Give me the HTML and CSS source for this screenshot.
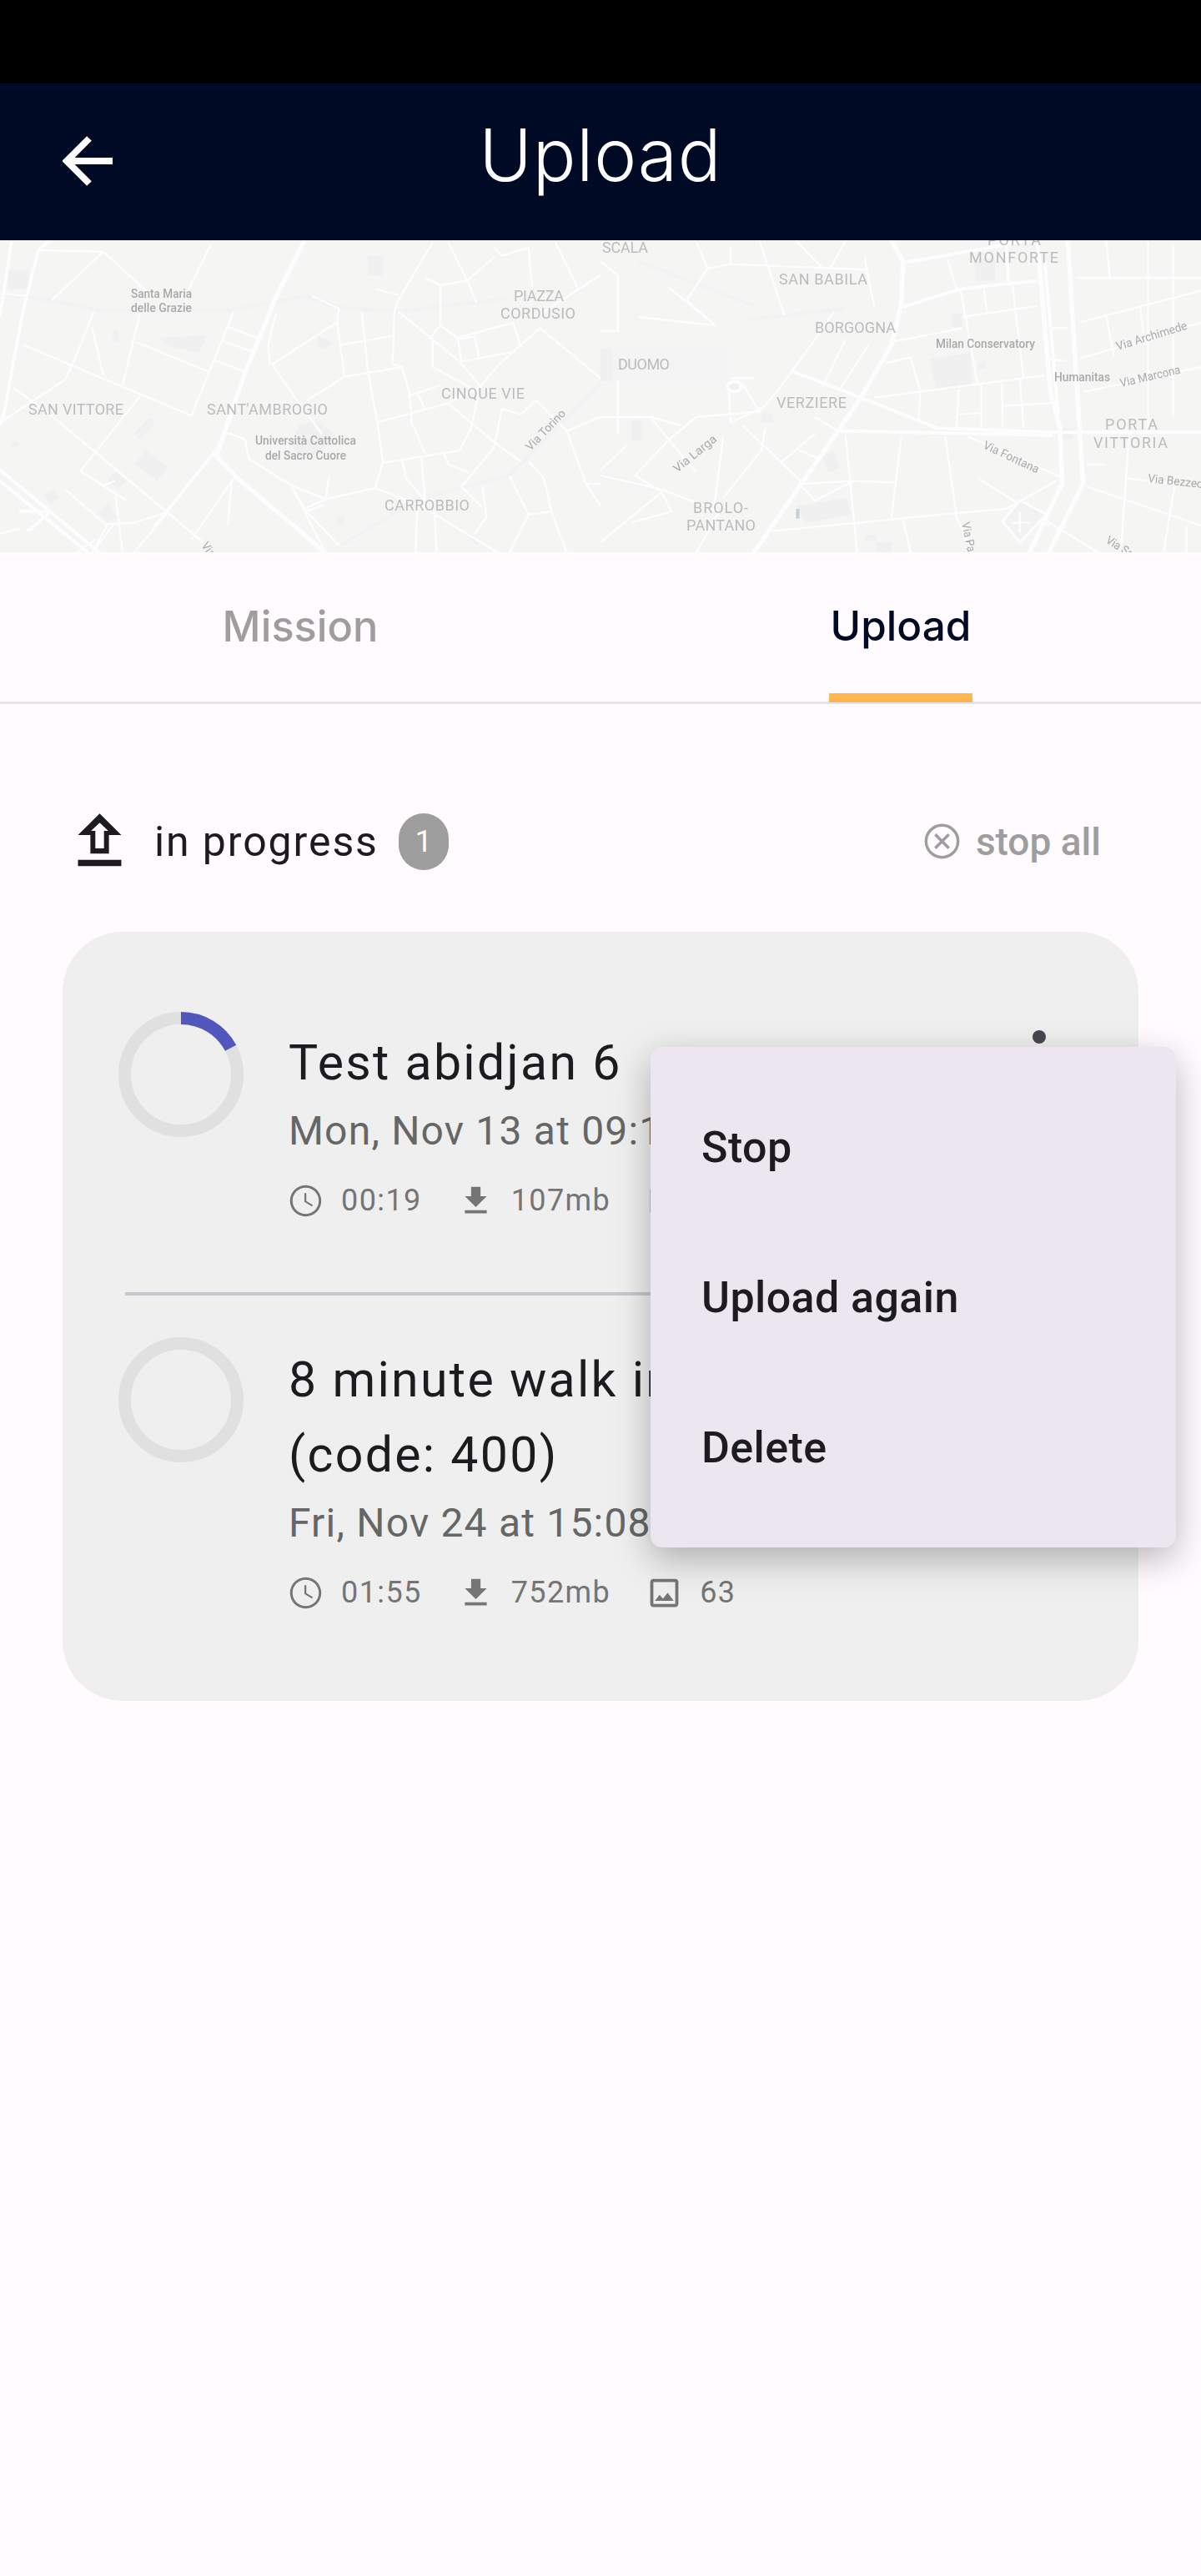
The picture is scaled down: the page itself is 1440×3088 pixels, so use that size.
FILE: index.html
```html
<!DOCTYPE html>
<html lang="en">
<head>
<meta charset="utf-8">
<title>Upload</title>
<link rel="stylesheet" href="styles.css">
</head>
<body>
<div class="page">
  <div class="statusbar"></div>
  <header class="appbar">
    <svg class="back" viewBox="0 0 60 60" aria-hidden="true"><path d="M60 30H6M32 3 5 30l27 27"/></svg>
    <h1 class="apptitle">Upload</h1>
  </header>

  <svg class="map" viewBox="0 288 1440 374" aria-hidden="true">
    <rect class="land" x="0" y="288" width="1440" height="374"/>
    <g transform="translate(0,280) scale(.4592,.3333)">
      <g class="block">
        <path d="M415 375 540 365 520 430 440 405Z"/><path d="M20 130h55v70H20Z"/><path d="M960 80h40v70h-40Z"/><path d="M295 350h15v40h-15Z"/>
        <path d="M280 880l25-25 25 35-25 30Z"/><path d="M350 720l40-60 15 20-40 60Z"/><path d="M350 830l30-50 60 60-30 50Z"/><path d="M115 940l25-20 15 30-25 25Z"/>
        <path d="M780 690l50-20 40 50-30 70-60 10-20-40Z"/><path d="M830 370l40 20-20 25-20-10Z"/><path d="M255 1000l30-30 20 50-25 20Z"/>
        <path d="M880 1020h20v20h-20Z"/><path d="M1230 1080l25 30-10 10-25-30Z"/><path d="M30 750h20v20H30Z"/>
      </g>
      <path class="tram" d="M0 215 130 240 260 275H600L800 225 885 265 1040 280 1320 235"/>
      <path class="tram" d="M890 1120 1100 950 1330 870 1568 540"/>
      <g class="minor">
        <path d="M100 60 270 65M0 215 70 225M270 65 135 240M270 65 400 230M550 40 490 210M365 290 320 545M245 280 190 470 170 525 0 680M60 400 500 655 610 280M355 390 545 497M595 335 675 378M580 385 660 425M560 455 640 497M240 335 270 510"/>
        <path d="M35 555 130 650 400 960 530 1110M365 585 210 855 330 960M210 855 270 905 300 890M300 925 320 1148M170 920 275 1045 350 1040 440 1000M130 1000 70 1070M610 880 500 1100M605 890 595 1050M440 1000 350 1148M280 1048 240 1148"/>
        <path d="M815 225 885 270 880 320 710 470 770 590 840 720M720 290 700 400 705 470M800 600 900 515 1050 480M880 320 900 515M945 280 960 490 985 680 1000 820 980 915M890 400 1025 368M1030 280 1025 470 1050 480 1070 580 1075 680 1110 790"/>
        <path d="M1130 380V480L1250 570M1040 280 1200 460 1255 550 1170 610 985 680M1170 610 1290 750 1360 820M1065 585 1150 545M1090 575 1110 630M1250 570 1230 700 1200 780 1110 800 1000 825M1310 630 1290 770 1205 910"/>
        <path d="M1150 180V330L1120 380M1150 330 1195 375 1205 460 1340 425 1410 340 1568 520M1195 375 1340 320 1360 410M1200 380 1240 370 1250 445M1300 475 1255 550M1340 425 1300 475M1290 50 1310 80 1380 50M1450 30 1510 200 1568 150M1510 200 1400 300M1130 30 1040 240 1030 280M1170 30 1220 170 1245 250M1220 170 1150 185 1110 160M1220 170 1290 85"/>
        <path d="M640 740 650 810 760 905 850 955 980 915 1100 980 1300 1148M590 715 640 740M760 905 800 1000 885 1120M850 955 795 990M800 1000 845 975M1205 910 1260 985M1330 870 1380 1010 1330 1148M1380 820 1420 880 1440 1000 1380 1010M1480 710 1530 900 1568 900M1400 600 1480 710 1568 660M1360 650 1400 600M1310 630 1360 650M1050 810 1060 880 1110 960M1100 800 1110 960M1160 790 1170 830 1225 860M1090 970 1085 1148M1135 1000 1140 1148M1260 910 1270 1020 1240 1080M1440 1000 1480 1148M1530 900 1568 980"/>
        <path d="M980 200 1040 220M1380 50 1390 200M0 1080 50 1060M200 1148 250 1100M300 1040 240 1148M850 955 860 870M760 905 850 1148"/>
      </g>
      <g class="mid">
        <path d="M100 60 60 280 10 650 0 690M30 30 0 300M0 850 260 1148M0 890 230 1148M50 1000 130 1000M75 1070 130 1000"/>
      </g>
      <path class="major" d="M795 25 720 230 640 500 575 760 565 800 620 880 850 1148"/>
      <path class="mid" d="M575 760 400 1060M130 25 100 60"/>
    </g>
    <g transform="translate(720,280) scale(.4592,.3333)">
      <g class="block">
        <path d="M860 450 965 430 970 550 875 558Z"/><path d="M975 90h55v80h-50Z"/><path d="M580 800l30-20 15 60-30 20Z"/><path d="M80 670h28v75H80Z"/><path d="M915 290l30-5v50h-25Z"/>
        <path d="M510 980l130-30 15 60-120 30Z"/><path d="M720 1110h40v40h-40Z"/><path d="M690 1085h30v20h-30Z"/><path d="M985 465h20v20h-20Z"/>
        <path class="duomo" d="M0 405H330V530H0Z"/><path d="M0 415H30V530H0Z"/><path d="M1205 700h30v36h-30Z"/><path d="M420 650h30v30h-30Z"/>
      </g>
      <path class="tram" d="M0 870 160 920M100 100 400 260M380 310 640 270"/>
      <g class="minor">
        <path d="M250 30 280 125 225 240 300 330M340 110 700 130M340 50V110M280 125 340 110M175 190 300 330M415 25 440 130 480 295M510 25 570 110 580 125M640 25 600 125M690 80 695 130 715 265M610 280 550 400 460 570 415 640 250 660 180 740 90 870 160 930 0 1110"/>
        <path d="M370 540 410 630M340 520H400M335 550 340 680 430 620M130 660 250 860M70 760 0 850M0 870 160 920 310 1000 250 1148M320 735 295 1000M370 690 470 820 530 900 655 890 770 895M430 700 420 780 320 950M470 825 560 720M520 780 570 810M160 930 185 1000 80 1040M580 550 640 380M625 560 700 400M560 660 620 710M100 300 300 330M0 350H45V150L0 100M45 530V720M0 660H80L130 660 210 690"/>
        <path d="M1240 160H1568M1250 320 1568 205M1250 450 1568 320M1260 570 1568 480M1320 25 1330 160M1430 30V700M1495 40V660M1320 290 1340 440M1410 270 1420 400M1380 720 1360 1120"/>
        <path d="M940 200 985 545M1000 190 1010 290M1075 180 1105 520M905 90 930 200M945 300 1140 260M760 390 945 340M745 465 810 445 835 570 830 680M715 590 1160 510M935 560 930 700M995 545V700M1048 535 1050 700M1095 525 1105 700M1050 620 1175 610M935 650 990 645M1180 340H1220M1170 450 1220 460"/>
        <path d="M640 725 670 1148M785 730 760 1020M900 730 930 1020 970 1148M960 730 1210 880M985 880 1300 1148M450 1070 890 1010 1060 990 1190 890M1270 910 1568 1050M1370 880 1500 900 1470 1148M790 1030 810 1148M1270 830H1320M520 900 560 960 660 890M1530 1050V1148M1120 1000 1170 1050"/>
      </g>
      <circle class="circle" cx="350" cy="550" r="18"/>
      <path class="hospital" d="M1095 960 1165 1010 1095 1110 1050 1035Z"/>
      <path class="minor" d="M1095 1000V1075M1075 1040H1120"/>
      <path class="oval" d="M515 990v35"/>
      <g class="mid">
        <path d="M790 105 1000 55 1130 20M785 265 940 200 1060 180 1140 170M1060 30 1065 180M500 495 680 590 880 700 1190 715H1568M620 710 1180 725M1160 100 1195 650"/>
      </g>
      <g class="major">
        <path d="M760 25 790 100 785 260 760 400 680 590 620 710 400 1148"/>
        <path d="M1140 20 1175 570 1200 700 1205 900 1120 1148M1220 25 1260 900 1170 1148"/>
      </g>
    </g>

    <g class="area">
      <text x="616" y="361" textLength="60">PIAZZA</text>
      <text x="600" y="382" textLength="90">CORDUSIO</text>
      <text x="34" y="497" textLength="114">SAN VITTORE</text>
      <text x="248" y="497" textLength="145">SANT'AMBROGIO</text>
      <text x="529" y="478" textLength="100">CINQUE VIE</text>
      <text x="461" y="612" textLength="102">CARROBBIO</text>
      <text x="722" y="303" textLength="55">SCALA</text>
      <text x="1184" y="294" textLength="64">PORTA</text>
      <text x="1162" y="315" textLength="107">MONFORTE</text>
      <text x="934" y="341" textLength="106">SAN BABILA</text>
      <text x="977" y="399" textLength="97">BORGOGNA</text>
      <text x="741" y="443" textLength="62">DUOMO</text>
      <text x="931" y="489" textLength="84">VERZIERE</text>
      <text x="1325" y="515" textLength="63">PORTA</text>
      <text x="1311" y="537" textLength="89">VITTORIA</text>
      <text x="831" y="615" textLength="66">BROLO-</text>
      <text x="823" y="636" textLength="83">PANTANO</text>
    </g>
    <g class="poi">
      <text x="157" y="357" textLength="73" lengthAdjust="spacingAndGlyphs">Santa Maria</text>
      <text x="157" y="374" textLength="73" lengthAdjust="spacingAndGlyphs">delle Grazie</text>
      <text x="306" y="533" textLength="121" lengthAdjust="spacingAndGlyphs">Università Cattolica</text>
      <text x="318" y="551" textLength="97" lengthAdjust="spacingAndGlyphs">del Sacro Cuore</text>
      <text x="1122" y="417" textLength="119" lengthAdjust="spacingAndGlyphs">Milan Conservatory</text>
      <text x="1264" y="457" textLength="67" lengthAdjust="spacingAndGlyphs">Humanitas</text>
    </g>
    <g class="street">
      <text transform="translate(636,541) rotate(-46)" textLength="62" lengthAdjust="spacingAndGlyphs">Via Torino</text>
      <text transform="translate(241,654) rotate(55)" textLength="18" lengthAdjust="spacingAndGlyphs">Via</text>
      <text transform="translate(1340,420) rotate(-17)" textLength="88" lengthAdjust="spacingAndGlyphs">Via Archimede</text>
      <text transform="translate(1344,464) rotate(-13)" textLength="74" lengthAdjust="spacingAndGlyphs">Via Marcona</text>
      <text transform="translate(1178,537) rotate(25)" textLength="72" lengthAdjust="spacingAndGlyphs">Via Fontana</text>
      <text transform="translate(1376,578) rotate(6)" textLength="66" lengthAdjust="spacingAndGlyphs">Via Bezzec</text>
      <text transform="translate(812,567) rotate(-39)" textLength="62" lengthAdjust="spacingAndGlyphs">Via Larga</text>
      <text transform="translate(1153,627) rotate(78)" textLength="36" lengthAdjust="spacingAndGlyphs">Via Pa</text>
      <text transform="translate(1325,650) rotate(32)" textLength="36" lengthAdjust="spacingAndGlyphs">Via Sa</text>
    </g>
  </svg>

  <nav class="tabs">
    <div class="tab"><span class="tab-label">Mission</span></div>
    <div class="tab"><span class="tab-label tab-label-active">Upload</span></div>
  </nav>

  <section class="section-head">
    <svg class="icon-upload" viewBox="0 0 24 24" aria-hidden="true"><path fill-rule="evenodd" d="M9 16h6v-6h4l-7-7-7 7h4zM10.600 14.300h2.800V8.600h1.400L12 6 9.200 8.600h1.400zM5 18h14v2H5z"/></svg>
    <span class="section-label">in progress</span>
    <span class="badge">1</span>
    <div class="stop-all">
      <svg class="icon-stop" viewBox="0 0 24 24" aria-hidden="true"><path d="M12 2.600a9.400 9.400 0 1 0 0 18.800 9.400 9.400 0 0 0 0-18.800z M8 8l8 8M16 8l-8 8"/></svg>
      <span>stop all</span>
    </div>
  </section>

  <section class="card">
    <article class="item item-first">
      <svg class="ring" viewBox="0 0 150 150" aria-hidden="true">
        <circle class="ring-track" cx="75" cy="75" r="67.5"/>
        <path class="ring-value" d="M75 7.500A67.500 67.500 0 0 1 134.600 43.300"/>
      </svg>
      <div class="item-body">
        <h2 class="item-title">Test abidjan 6</h2>
        <p class="item-date">Mon, Nov 13 at 09:12</p>
        <div class="meta">
          <svg class="icon" viewBox="0 0 24 24" aria-hidden="true"><path d="M11.990 2C6.470 2 2 6.480 2 12s4.470 10 9.990 10C17.520 22 22 17.520 22 12S17.520 2 11.990 2zM12 20.400c-4.640 0-8.400-3.760-8.400-8.400S7.360 3.600 12 3.600s8.400 3.760 8.400 8.400-3.760 8.400-8.400 8.400zM12.400 7H11.200v5.700l4.800 2.900.6-1-4.200-2.500z"/></svg>
          <span class="meta-text">00:19</span>
          <svg class="icon" viewBox="0 0 24 24" aria-hidden="true"><path d="M19 9h-4V3H9v6H5l7 7 7-7zM5 18v2h14v-2H5z"/></svg>
          <span class="meta-text">107mb</span>
          <svg class="icon" viewBox="0 0 24 24" aria-hidden="true"><path d="M19 5v14H5V5h14m0-2H5c-1.100 0-2 .9-2 2v14c0 1.100.9 2 2 2h14c1.100 0 2-.9 2-2V5c0-1.100-.9-2-2-2zm-4.860 8.860-3 3.870L9 13.140 6 17h12l-3.860-5.140z"/></svg>
          <span class="meta-text">21</span>
        </div>
      </div>
      <div class="kebab"><i></i><i></i><i></i></div>
    </article>
    <hr class="divider">
    <article class="item item-second">
      <svg class="ring" viewBox="0 0 150 150" aria-hidden="true">
        <circle class="ring-track" cx="75" cy="75" r="67.5"/>
      </svg>
      <div class="item-body">
        <h2 class="item-title">8 minute walk in Milan failed<br>(code: 400)</h2>
        <p class="item-date">Fri, Nov 24 at 15:08</p>
        <div class="meta">
          <svg class="icon" viewBox="0 0 24 24" aria-hidden="true"><path d="M11.990 2C6.470 2 2 6.480 2 12s4.470 10 9.990 10C17.520 22 22 17.520 22 12S17.520 2 11.990 2zM12 20.400c-4.640 0-8.400-3.760-8.400-8.400S7.360 3.600 12 3.600s8.400 3.760 8.400 8.400-3.760 8.400-8.400 8.400zM12.400 7H11.200v5.700l4.800 2.900.6-1-4.200-2.500z"/></svg>
          <span class="meta-text">01:55</span>
          <svg class="icon" viewBox="0 0 24 24" aria-hidden="true"><path d="M19 9h-4V3H9v6H5l7 7 7-7zM5 18v2h14v-2H5z"/></svg>
          <span class="meta-text">752mb</span>
          <svg class="icon" viewBox="0 0 24 24" aria-hidden="true"><path d="M19 5v14H5V5h14m0-2H5c-1.100 0-2 .9-2 2v14c0 1.100.9 2 2 2h14c1.100 0 2-.9 2-2V5c0-1.100-.9-2-2-2zm-4.860 8.860-3 3.870L9 13.140 6 17h12l-3.860-5.140z"/></svg>
          <span class="meta-text">63</span>
        </div>
      </div>
    </article>
  </section>

  <div class="menu" role="menu">
    <div class="menu-item">Stop</div>
    <div class="menu-item">Upload again</div>
    <div class="menu-item">Delete</div>
  </div>
</div>
</body>
</html>
```

FILE: styles.css
```css
* { box-sizing: border-box; }
html, body { margin: 0; padding: 0; }
body { background: #fffbfe; font-family: Roboto, "Noto Sans", sans-serif; color: #1c1b1f; }
.page { position: relative; width: 1440px; height: 3088px; overflow: hidden; background: #fffbfe; }

.statusbar { height: 100px; background: #000; }
.appbar { height: 188px; background: #000a24; display: grid; grid-template-columns: 75px 60px 1fr 135px; align-items: center; }
.back { grid-column: 2; width: 60px; height: 60px; margin-top: -2px; }
.back path { fill: none; stroke: #fff; stroke-width: 8; }
.apptitle { grid-column: 3; margin: -16px 0 0; text-align: center; font-family: Inter, sans-serif; font-weight: 350; font-size: 86px; line-height: 100px; letter-spacing: .8px; color: #fff; }

.map { display: block; width: 1440px; height: 374px; filter: blur(.4px); }
.land { fill: #f5f5f4; }
.map path { fill: none; vector-effect: non-scaling-stroke; }
.minor path, path.minor { stroke: #fdfdfd; stroke-width: 2.4; stroke-linejoin: round; }
.mid path, path.mid { stroke: #fdfdfd; stroke-width: 4; }
.major path, path.major { stroke: #fdfdfd; stroke-width: 5.5; stroke-linejoin: round; }
.map path.tram { stroke: #f1f2f1; stroke-width: 4; }
.block path { fill: #eff0ef; }
.map .block path.duomo { fill: #f3f4f3; }
.circle { fill: #eff0ef; stroke: #fdfdfd; stroke-width: 4; vector-effect: non-scaling-stroke; }
.map path.hospital { fill: #f1f2f1; stroke: #fdfdfd; stroke-width: 3; }
.map path.oval { stroke: #c6ced2; stroke-width: 4; }
.area text { font-family: Roboto, sans-serif; font-size: 18px; fill: #bcbcbc; }
.poi text { font-family: Roboto, sans-serif; font-size: 14px; font-weight: 500; fill: #a9a9a9; }
.street text { font-family: Roboto, sans-serif; font-size: 14px; fill: #a9a9a9; }

.tabs { display: flex; height: 182px; box-shadow: inset 0 -3px 0 #e7e1ea; }
.tab { flex: 1 1 50%; height: 180px; display: flex; justify-content: center; }
.tab-label { height: 100%; padding: 84px 2px 0; font-family: Inter, sans-serif; font-weight: 500; font-size: 50.5px; line-height: 9px; color: #9e9e9e; }
.tab-label-active { font-size: 49.5px; color: #000a24; border-bottom: 11px solid #ffb74d; }

.section-head { display: flex; align-items: center; height: 89px; margin-top: 120px; padding: 0 120px 0 75px; }
.icon-upload { width: 89px; height: 89px; fill: #1c1b1f; flex: none; }
.section-label { margin-left: 21px; font-size: 50px; letter-spacing: 1.9px; line-height: 60px; }
.badge { margin-left: 24px; width: 60px; height: 68px; border-radius: 30px; background: #9e9e9e; color: #fff; font-size: 36px; display: flex; align-items: center; justify-content: center; }
.stop-all { margin-left: auto; display: flex; align-items: center; gap: 16px; color: #9e9e9e; font-size: 46px; font-weight: 500; }
.icon-stop { width: 49px; height: 49px; flex: none; fill: none; stroke: #9e9e9e; stroke-width: 1.7; }

.card { width: 1290px; height: 922px; margin: 64px 0 0 75px; padding: 96px 0 0 67px; background: #eeefee; border-radius: 72px; }
.item { display: flex; gap: 54px; }
.item-first { height: 336px; padding-right: 111px; }
.item-second { margin-top: 50px; }
.ring { width: 150px; height: 150px; flex: none; }
.ring-track { fill: none; stroke: #e0e0e0; stroke-width: 15; }
.ring-value { fill: none; stroke: #5257bd; stroke-width: 15; }
.item-body { min-width: 0; flex: 1; }
.item-first .item-body { padding-top: 16px; }
.item-second .item-body { padding-top: 6px; }
.item-title { margin: 0; font-weight: 400; font-size: 59px; line-height: 90px; letter-spacing: 2.3px; white-space: nowrap; color: #1c1b1f; }
.item-date { margin: 4px 0 0; font-size: 48px; line-height: 66px; letter-spacing: 1.2px; color: #666; white-space: nowrap; }
.meta { display: flex; align-items: center; height: 60px; margin: 20px 0 0 -2px; color: #757575; font-size: 36px; letter-spacing: 1.4px; }
.icon { width: 45px; height: 45px; fill: #757575; flex: none; margin-right: 20px; }
.meta-text { margin-right: 42px; }
.kebab { flex: none; width: 16px; margin-top: 22px; display: flex; flex-direction: column; gap: 12px; }
.kebab i { display: block; width: 16px; height: 16px; border-radius: 50%; background: #49454f; }
.divider { margin: 0 0 0 8px; width: 1140px; height: 4px; border: 0; background: #cac4d0; }

.menu { position: absolute; left: 780px; top: 1255px; width: 630px; height: 600px; padding: 30px 0; border-radius: 14px; background: #ebe6f0; box-shadow: 0 14px 44px rgba(0,0,0,.28); }
.menu-item { height: 180px; padding: 0 61px; display: flex; align-items: center; font-size: 52px; font-weight: 500; letter-spacing: .4px; color: #1c1b1f; }
```
